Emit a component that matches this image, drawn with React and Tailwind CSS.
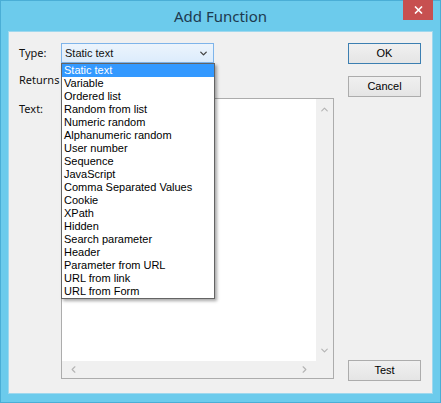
import { ChevronDown, ChevronUp, ChevronLeft, ChevronRight } from "lucide-react";

const OPTIONS = [
  "Static text",
  "Variable",
  "Ordered list",
  "Random from list",
  "Numeric random",
  "Alphanumeric random",
  "User number",
  "Sequence",
  "JavaScript",
  "Comma Separated Values",
  "Cookie",
  "XPath",
  "Hidden",
  "Search parameter",
  "Header",
  "Parameter from URL",
  "URL from link",
  "URL from Form",
];

function Button({ children, primary }) {
  return (
    <button
      className={
        "h-[21px] w-[73px] border bg-gradient-to-b from-[#f0f0f0] to-[#e5e5e5] text-[11px] text-black font-['Liberation_Sans',sans-serif] " +
        (primary ? "border-[#3c7fb1]" : "border-[#acacac]")
      }
    >
      {children}
    </button>
  );
}

export default function App() {
  return (
    <div className="w-[441px] h-[403px] bg-[#6ccbec] border border-[#4aaed6] flex flex-col font-['Noto_Sans',sans-serif]">
      <div className="relative h-[30px] flex items-center justify-center">
        <span className="text-[15px] text-[#1d3a4f] pt-[1px]">Add Function</span>
        <div className="absolute top-[-1px] right-[7px] w-[30px] h-[20px] bg-[#c75050] flex items-center justify-center">
          <svg width="9" height="8" viewBox="0 0 9 8">
            <path d="M1 0.5 L8 7.5 M8 0.5 L1 7.5" stroke="#fff" strokeWidth="1.6" />
          </svg>
        </div>
      </div>

      <div className="mx-[7px] mb-[8px] flex-1 bg-[#f0f0f0] border border-[#9fd8ee] flex pl-[10px] pr-[11px] pt-[11px] pb-[12px]">
        <div className="w-[315px] flex flex-col text-[11px] text-[#111]">
          <div className="flex items-center h-[20px]">
            <span className="w-[42px]">Type:</span>
            <div className="relative w-[153px] h-[20px]">
              <div className="h-full border border-[#7eb4ea] bg-gradient-to-b from-[#ecf4fc] to-[#dcecfc] flex items-center pl-[3px] pr-[4px] font-['Liberation_Sans',sans-serif] text-[11px]">
                <span className="flex-1">Static text</span>
                <ChevronDown size={11} strokeWidth={3} className="text-[#444]" />
              </div>
              <div className="absolute top-full left-0 w-[154px] z-10 bg-white border border-[#646464] shadow-[2px_2px_3px_rgba(0,0,0,0.35)] font-['Liberation_Sans',sans-serif] text-[11px] leading-[13px]">
                {OPTIONS.map((o, i) => (
                  <div
                    key={o}
                    className={
                      "h-[13px] pl-[2px] whitespace-nowrap " +
                      (i === 0 ? "bg-[#3399ff] text-white" : "text-black")
                    }
                  >
                    {o}
                  </div>
                ))}
              </div>
            </div>
          </div>

          <div className="flex items-center h-[20px] mt-[7px]">
            <span>Returns list</span>
          </div>

          <div className="flex mt-[8px]">
            <span className="w-[42px] pt-[3px]">Text:</span>
            <div className="w-[273px] h-[281px] border border-[#acacac] bg-white flex flex-col">
              <div className="flex-1 flex">
                <div className="flex-1" />
                <div className="w-[17px] bg-[#f0f0f0] flex flex-col items-center justify-between py-[5px] text-[#b4b4b4]">
                  <ChevronUp size={11} strokeWidth={2.5} />
                  <ChevronDown size={11} strokeWidth={2.5} />
                </div>
              </div>
              <div className="h-[17px] flex">
                <div className="flex-1 bg-[#f0f0f0] flex items-center justify-between px-[6px] text-[#b4b4b4]">
                  <ChevronLeft size={11} strokeWidth={2.5} />
                  <ChevronRight size={11} strokeWidth={2.5} />
                </div>
                <div className="w-[17px] bg-[#f0f0f0]" />
              </div>
            </div>
          </div>
        </div>

        <div className="ml-auto flex flex-col">
          <Button primary>OK</Button>
          <div className="mt-[8px]">
            <Button>Cancel</Button>
          </div>
          <div className="mt-auto">
            <Button>Test</Button>
          </div>
        </div>
      </div>
    </div>
  );
}
